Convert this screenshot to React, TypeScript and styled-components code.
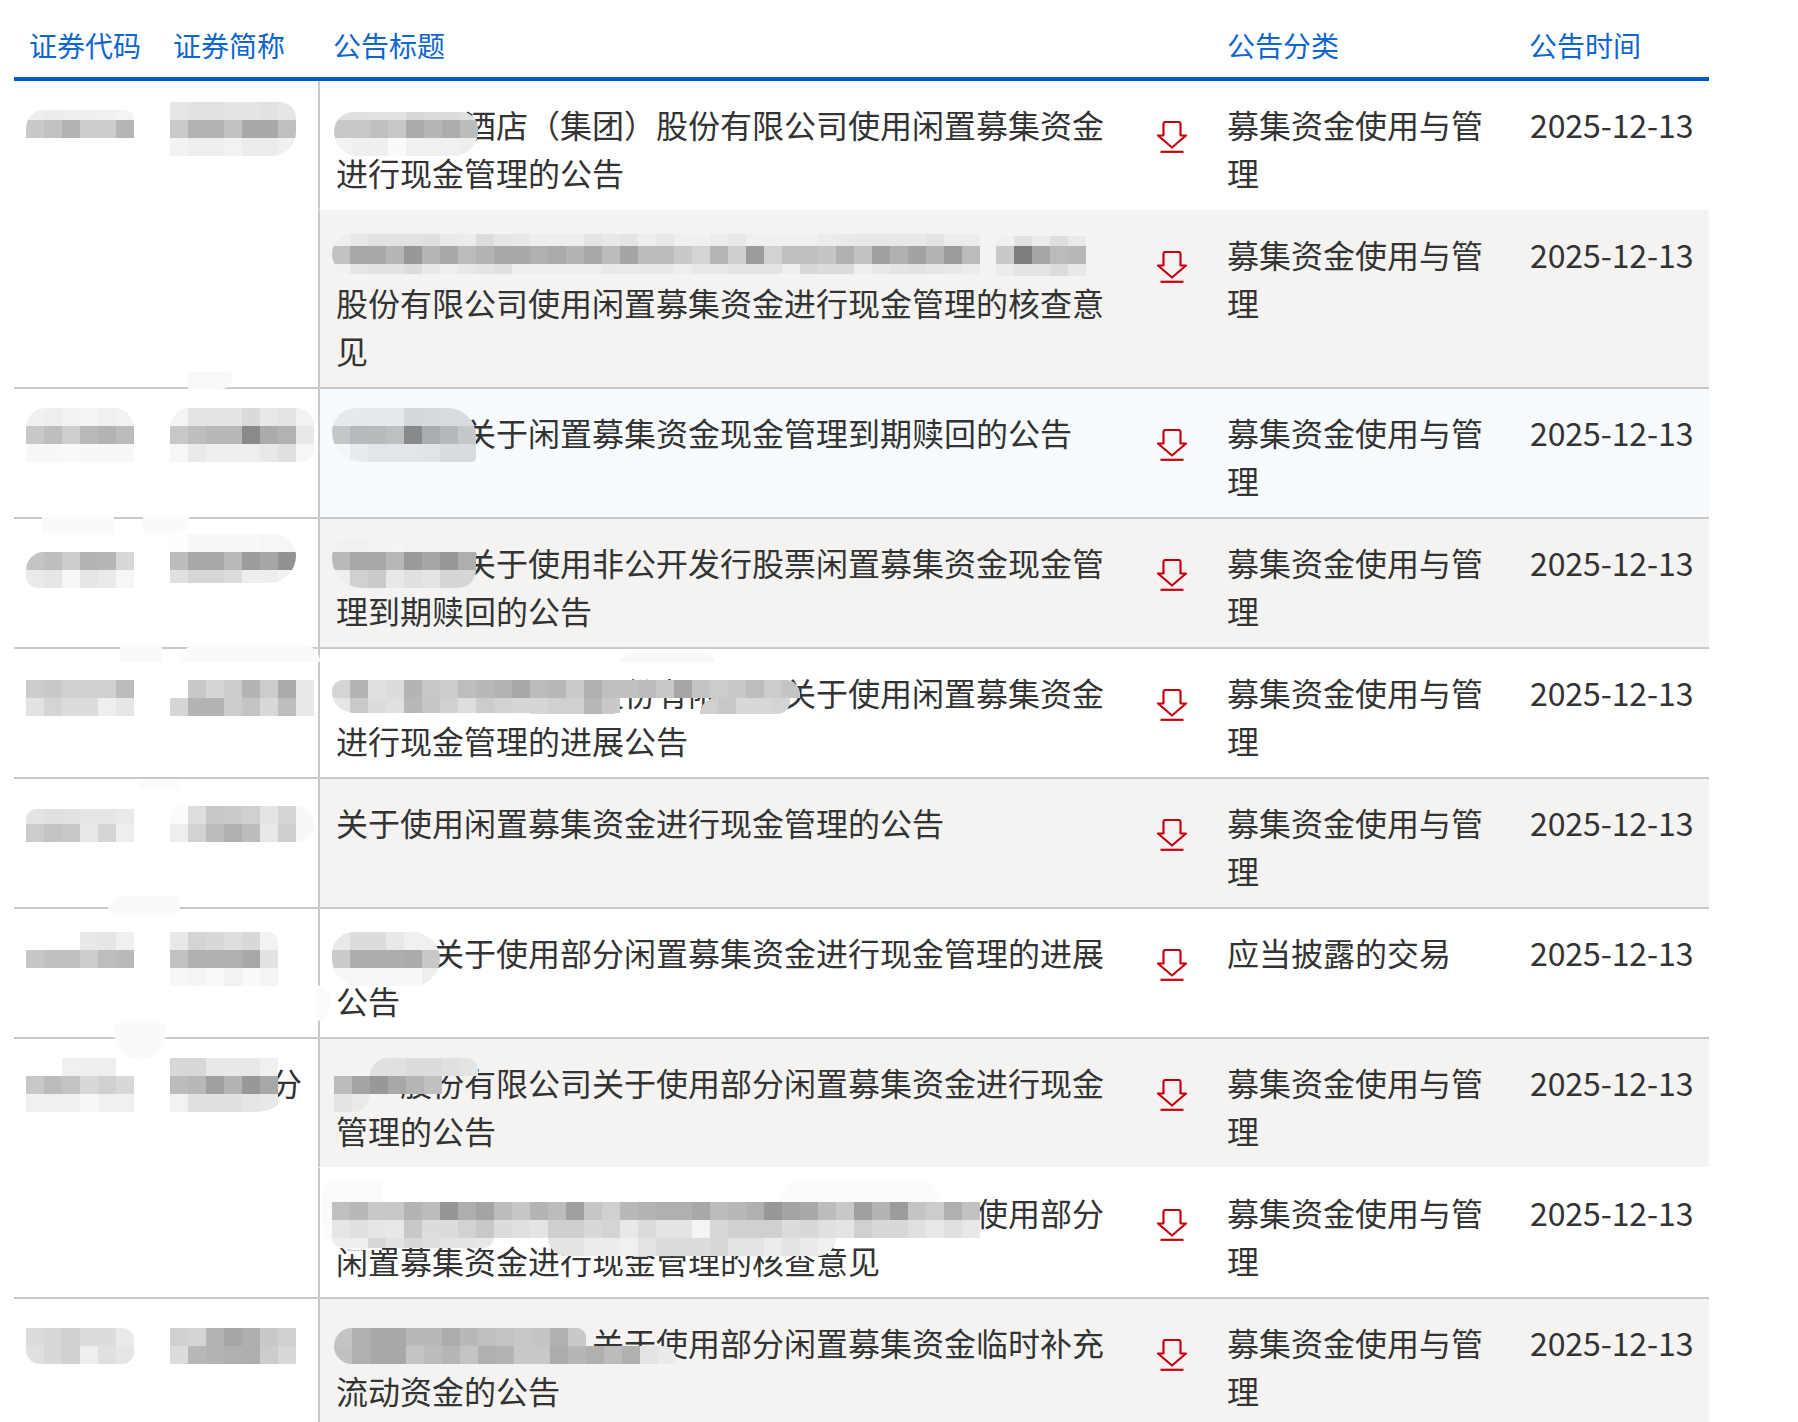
import React from "react";
import styled, { createGlobalStyle } from "styled-components";

const Global = createGlobalStyle`
  html, body { margin: 0; padding: 0; background: #fff; }
  body { font-family: "Noto Sans CJK SC", "Noto Sans", sans-serif; }
`;

const Page = styled.div`
  position: relative;
  width: 1798px;
  height: 1422px;
  overflow: hidden;
  padding-left: 14px;
  box-sizing: border-box;
`;

const Table = styled.table`
  width: 1695px;
  table-layout: fixed;
  border-collapse: separate;
  border-spacing: 0;
  font-size: 32px;
  line-height: 48px;
  color: #333;
`;

const HeadCell = styled.th`
  padding: 22px 0 0 15px;
  box-sizing: content-box;
  font-size: 28px;
  line-height: 46px;
  font-weight: 400;
  color: #0f66cf;
  text-align: left;
  vertical-align: top;
  border-bottom: 4px solid #005bc9;
  height: 55px;
`;

type Kind = "first" | "next" | "solo";
type Tone = "white" | "gray" | "blue";
const tones: Record<Tone, string> = { white: "#fff", gray: "#f4f3f2", blue: "#f8fbfe" };

const cellEdge = (p: { $kind: Kind }) =>
  p.$kind === "first"
    ? "padding: 19px 16px 13px 16px; border-bottom: 1px solid #fff;"
    : p.$kind === "next"
      ? "padding: 20px 16px 13px 16px; border-bottom: 2px solid #c9c9c9;"
      : "padding: 19px 16px 13px 16px; border-bottom: 2px solid #c9c9c9;";

const Cell = styled.td<{ $kind: Kind; $tone: Tone }>`
  ${cellEdge};
  background: ${(p) => tones[p.$tone]};
  vertical-align: top;
`;

const SideCell = styled.td`
  padding: 19px 16px 13px;
  vertical-align: top;
  background: #fff;
  border-bottom: 2px solid #c9c9c9;
  overflow: hidden;
`;

const TitleCell = styled(Cell)`
  border-left: 2px solid #c9c9c9;
  padding-right: 14px;
`;

const IconCell = styled(Cell)`
  padding-left: 12px;
  padding-right: 0;
`;

const CategoryCell = styled(Cell)`
  padding-left: 15px;
`;

const DateCell = styled(Cell)`
  white-space: nowrap;
  padding-right: 0;
  letter-spacing: -0.1px;
`;

const Hidden = styled.span<{ $em: number }>`
  display: inline-block;
  width: ${(p) => p.$em}em;
  height: 1em;
`;

const DownIcon = styled.svg`
  display: block;
  width: 30px;
  height: 32px;
  margin: 21px auto 0;
`;

const Overlay = styled.div`
  position: absolute;
  inset: 0;
  pointer-events: none;
`;

const Frame = styled.div<{ $x: number; $y: number; $w: number; $h: number; $r?: string; $fill?: string }>`
  position: absolute;
  left: ${(p) => p.$x}px;
  top: ${(p) => p.$y}px;
  width: ${(p) => p.$w}px;
  height: ${(p) => p.$h}px;
  border-radius: ${(p) => p.$r || "0"};
  background: ${(p) => p.$fill || "transparent"};
  overflow: hidden;
`;

const Grid = styled.svg`
  display: block;
`;

type Block = { x: number; y: number; rows: string[]; r?: string; trim?: number; cut?: number };
type Patch = { x: number; y: number; w: number; h: number; fill: string; r?: string };

const C = 18;

function Mosaic({ x, y, rows, r, trim = 0, cut = 0 }: Block) {
  const grid = rows.map((row) => row.trim().split(/\s+/));
  const cols = Math.max(...grid.map((g) => g.length));
  const w = cols * C;
  const h = grid.length * C - trim - cut;
  return (
    <Frame $x={x} $y={y + trim} $w={w} $h={h} $r={r}>
      <Grid width={w} height={h} viewBox={`0 ${trim} ${w} ${h}`} shapeRendering="crispEdges">
        {grid.flatMap((row, ry) =>
          row.map((v, cx) =>
            v === "--" ? null : (
              <rect
                key={`${ry}-${cx}`}
                x={cx * C}
                y={ry * C}
                width={C}
                height={C}
                fill={v.length === 2 ? `#${v}${v}${v}` : `#${v}`}
              />
            ),
          ),
        )}
      </Grid>
    </Frame>
  );
}

const patches: Patch[] = [
  { x: 188, y: 372, w: 44, h: 17, fill: "#f9f9f9", r: "0 4px 10px 0" },
  { x: 42, y: 517, w: 72, h: 16, fill: "#fafafa" },
  { x: 143, y: 517, w: 46, h: 16, fill: "#fafafa", r: "0 0 20px 0" },
  { x: 120, y: 645, w: 42, h: 17, fill: "#fafafa" },
  { x: 180, y: 645, w: 140, h: 17, fill: "#fafafa", r: "20px 20px 0 0" },
  { x: 620, y: 653, w: 95, h: 9, fill: "#f8f8f8", r: "40px 40px 0 0" },
  { x: 138, y: 780, w: 40, h: 8, fill: "#fafafa" },
  { x: 107, y: 896, w: 73, h: 17, fill: "#fafafa", r: "24px 0 0 0" },
  { x: 115, y: 1023, w: 50, h: 36, fill: "#fafafa", r: "0 0 24px 24px" },
  { x: 316, y: 985, w: 14, h: 36, fill: "#fbfbfb", r: "0 14px 14px 0" },
  { x: 322, y: 1180, w: 60, h: 70, fill: "#fbfbfb", r: "20px 0 0 30px" },
  { x: 780, y: 1180, w: 160, h: 22, fill: "#fbfbfb", r: "30px 30px 0 0" },
];

const blocks: Block[] = [
  // row 1
  { x: 26, y: 102, trim: 8, r: "18px 8px 0 0", rows: ["ee ec ee ef f0 f4", "c9 c2 b3 cc cd b5"] },
  { x: 170, y: 102, r: "0 16px 24px 0", rows: ["e6 e2 e2 e4 e4 e2 e6", "ca b3 b3 c2 a8 a8 bf", "f2 ee ee f2 ec ec f0"] },
  { x: 334, y: 102, trim: 10, r: "24px 20px 30px 30px", rows: ["e0 e0 e2 e2 d8 dc dc e0", "c8 c8 c0 c8 ab b6 ad bc", "f3 ef ef fa f0 f0 f0 ee"] },
  // row 2
  {
    x: 332,
    y: 228,
    trim: 6,
    cut: 8,
    r: "20px 0 0 20px",
    rows: [
      "ee e8 e2 e2 e2 e0 ea ec dc e6 e8 ee ee ee e4 e8 e4 ee e8 f0 f0 ec e8 f0 f0 f0 f0 ec ea e8 e8 e8 e8 e4 ec ec",
      "c2 a8 a8 b6 98 b6 a8 bc b4 a9 a9 b0 aa b4 a8 bc a5 bc bc c9 d4 b5 cf 9c d2 bf bf c5 b0 c2 a0 b0 a3 b4 9c bc",
      "f0 e6 e2 e2 dc e8 ee e8 e4 e0 ee ee ee ee ee e9 ea e8 e8 ee e8 e8 e4 e4 e4 ee d8 dc dc ee e8 e4 e2 e6 e8 ec",
    ],
  },
  { x: 996, y: 228, trim: 8, cut: 6, rows: ["f0 e2 ec de ea", "c9 7e a6 bb b7", "ec e4 e4 dc e8"] },
  // row 3
  { x: 26, y: 408, r: "20px 20px 0 0", rows: ["f0 ee f2 f4 f0 f2", "c8 be ce b9 b3 bc", "f8 f8 fa f8 f8 f8"] },
  { x: 170, y: 408, r: "20px 18px 14px 0", rows: ["f4 e4 e4 e4 da e8 e4 f2", "c8 be b8 b8 8a ab b2 e8", "f6 ea ee ee ee e8 e0 f6"] },
  {
    x: 332,
    y: 408,
    r: "24px 28px 4px 30px",
    rows: [
      "e6eaec e6eaec e6eaec e6eaec d4d8db d6dade d8dce0 d8dce0",
      "c3c7c8 b6babc b6bbbc bcc0c1 87898b a9adaf b5b9bb c4c8ca",
      "f4f6f7 e8ecee e2e6e9 e2e6e9 e2e6e9 e0e4e7 d8dce0 d8dce0",
    ],
  },
  // row 4
  { x: 26, y: 552, r: "18px 0 0 12px", rows: ["c4 be cc b4 b6 d8", "ea e6 f6 e6 ea f6"] },
  { x: 170, y: 534, cut: 5, r: "0 24px 30px 0", rows: ["fe f8 f8 f8 f8 f6 f6", "bc a8 a8 ba 9c a6 92", "e0 d6 d6 dc ee ee f2"] },
  { x: 332, y: 534, trim: 4, r: "26px 8px 24px 40px", rows: ["f0 f0 f2 f4 f2 f2 f2 f2", "b9 a8 a8 b8 9a a6 98 ae", "ee d0 ca e8 e0 e4 d6 d6"] },
  // row 5
  { x: 26, y: 680, rows: ["cc c8 d0 d0 d0 bc", "e2 d4 dc dc ee e6"] },
  { x: 170, y: 680, rows: ["-- c8 d6 cc b4 cc aa e8", "d6 b4 b4 cc c4 d8 be e8"] },
  {
    x: 332,
    y: 680,
    cut: 3,
    r: "16px 20px 0 30px",
    rows: ["d4 b4 e0 dc b4 c8 cc bd b8 b4 a8 bc b8 ca b0 c0 c0 bc c8 a6 c4 cc c8 bd cc c4", "e6 ca dc e0 b8 c6 d0 de cc d2 d6 d6 d0 d0 b8 c8 -- -- -- -- -- -- -- -- -- --"],
  },
  { x: 530, y: 698, cut: 2, r: "0 0 8px 0", rows: ["d6 d0 d0 b8 c8"] },
  { x: 700, y: 698, cut: 2, r: "20px 0 16px 0", rows: ["d0 c8 d8 d8 d4"] },
  // row 6
  { x: 26, y: 806, trim: 3, r: "10px 0 0 0", rows: ["e4 e0 e2 e6 e6 ea", "cc c4 c8 e8 d4 ee"] },
  { x: 170, y: 806, r: "16px 30px 30px 0", rows: ["fb de c8 ca d0 e4 d4 f8", "ee d2 bc b0 bc e8 ce f8"] },
  // row 7
  { x: 26, y: 932, rows: ["-- -- -- e8 e6 f0", "c6 c0 c0 cc bd ba"] },
  { x: 170, y: 932, r: "0 10px 0 0", rows: ["e8 d4 d8 de d8 f2", "c2 b0 b0 b0 a8 e2", "f6 f4 fa f2 fa f4"] },
  { x: 332, y: 932, r: "24px 30px 30px 30px", rows: ["e8 dc dc e8 f0 f0", "cb ad ad ad ab c8", "f6 f6 f8 f8 f8 ee"] },
  // row 8
  { x: 26, y: 1058, r: "14px 0 0 0", rows: ["-- -- f0 ee ee --", "c8 bc c4 d8 d0 d8", "f0 f0 f0 f8 f0 f0"] },
  { x: 170, y: 1058, r: "0 10px 40px 0", rows: ["d8 d8 e8 e8 e8 f0 --", "bc b8 a0 b4 98 a8 --", "f2 e0 e0 e0 e6 e8 --"] },
  { x: 334, y: 1076, rows: ["bc a4 98 a8 b5 c0"] },
  { x: 370, y: 1058, r: "24px 16px 0 0", rows: ["e0 e0 dc dc e0 e4"] },
  { x: 334, y: 1094, r: "0 0 18px 0", rows: ["e4 ea"] },
  // row 9
  {
    x: 332,
    y: 1202,
    rows: [
      "c0 b8 c8 c8 b4 bc 96 ae a4 bc c6 b4 bc a0 c6 d0 b8 b4 b0 b0 a8 bc b8 b0 98 a4 a8 bc c8 a0 b4 9c c4 cc b0 c2",
      "e6 e0 e6 e8 c8 dc dc d2 c8 dc e0 e4 cf cf d8 d4 e8 dc e4 e4 f4 d8 d0 d0 d0 dc d8 e0 e4 d0 d8 d8 e0 e8 e0 e8",
    ],
  },
  { x: 332, y: 1238, cut: 8, r: "0 0 30px 30px", rows: ["ee ee d8 e2 d8 de e4 e4 e8"] },
  { x: 548, y: 1238, r: "0 0 24px 24px", rows: ["e4 e4 ec ec f0 e4 dc dc dc d8 e4 e4 ec e4 ea f0"] },
  // row 10
  { x: 26, y: 1328, r: "0 12px 12px 14px", rows: ["dc d8 d0 dc dc ea", "e0 d8 d0 ee e0 e6"] },
  { x: 170, y: 1328, rows: ["d0 d4 b4 a6 ae c8 d0", "dc b8 b4 b0 ae cc d8"] },
  {
    x: 334,
    y: 1328,
    r: "20px 10px 0 20px",
    rows: ["c4 b0 a8 a8 b8 b8 ac b8 c0 c4 c8 c4 b0 c8", "c0 b0 a8 a8 c4 bc b6 c4 b0 b4 c8 c8 ac b6"],
  },
  { x: 586, y: 1346, r: "0 14px 0 0", rows: ["b0 bc b0 e4 ea"] },
];

const FUND = "募集资金使用与管理";

type Row = {
  kind: Kind;
  tone: Tone;
  side?: number;
  sideTail?: string;
  title: React.ReactNode;
  category?: string;
};

const rows: Row[] = [
  {
    kind: "first",
    tone: "white",
    side: 2,
    title: (
      <>
        <Hidden $em={4} />
        酒店（集团）股份有限公司使用闲置募集资金进行现金管理的公告
      </>
    ),
  },
  {
    kind: "next",
    tone: "gray",
    title: (
      <>
        <Hidden $em={24} />
        股份有限公司使用闲置募集资金进行现金管理的核查意见
      </>
    ),
  },
  {
    kind: "solo",
    tone: "blue",
    side: 1,
    title: (
      <>
        <Hidden $em={4} />
        关于闲置募集资金现金管理到期赎回的公告
      </>
    ),
  },
  {
    kind: "solo",
    tone: "gray",
    side: 1,
    title: (
      <>
        <Hidden $em={4} />
        关于使用非公开发行股票闲置募集资金现金管理到期赎回的公告
      </>
    ),
  },
  {
    kind: "solo",
    tone: "white",
    side: 1,
    title: (
      <>
        <Hidden $em={8} />
        股份有限
        <Hidden $em={2} />
        关于使用闲置募集资金进行现金管理的进展公告
      </>
    ),
  },
  { kind: "solo", tone: "gray", side: 1, title: "关于使用闲置募集资金进行现金管理的公告" },
  {
    kind: "solo",
    tone: "white",
    side: 1,
    title: (
      <>
        <Hidden $em={3} />
        关于使用部分闲置募集资金进行现金管理的进展公告
      </>
    ),
    category: "应当披露的交易",
  },
  {
    kind: "first",
    tone: "gray",
    side: 2,
    sideTail: "分",
    title: (
      <>
        <Hidden $em={2} />
        股份有限公司关于使用部分闲置募集资金进行现金管理的公告
      </>
    ),
  },
  {
    kind: "next",
    tone: "white",
    title: (
      <>
        <Hidden $em={20} />
        使用部分闲置募集资金进行现金管理的核查意见
      </>
    ),
  },
  {
    kind: "solo",
    tone: "gray",
    side: 1,
    title: (
      <>
        <Hidden $em={8} />
        关于使用部分闲置募集资金临时补充流动资金的公告
      </>
    ),
  },
];

function Download() {
  return (
    <DownIcon viewBox="0 0 30 32" fill="none" stroke="#c4000f" strokeWidth="2.2" strokeLinejoin="round">
      <path d="M6.5 14.5V3a2 2 0 0 1 2-2h13a2 2 0 0 1 2 2v11.5h5.5L15 26.5 1 14.5z" />
      <path d="M3.5 30.8h23" />
    </DownIcon>
  );
}

export default function App() {
  return (
    <Page>
      <Global />
      <Table>
        <colgroup>
          <col width={144} />
          <col width={160} />
          <col width={802} />
          <col width={92} />
          <col width={302} />
          <col width={195} />
        </colgroup>
        <thead>
          <tr>
            <HeadCell>证券代码</HeadCell>
            <HeadCell>证券简称</HeadCell>
            <HeadCell>公告标题</HeadCell>
            <HeadCell />
            <HeadCell>公告分类</HeadCell>
            <HeadCell>公告时间</HeadCell>
          </tr>
        </thead>
        <tbody>
          {rows.map((row, i) => (
            <tr key={i}>
              {row.side ? (
                <>
                  <SideCell rowSpan={row.side} />
                  <SideCell rowSpan={row.side}>
                    {row.sideTail && (
                      <>
                        <Hidden $em={3} />
                        {row.sideTail}
                      </>
                    )}
                  </SideCell>
                </>
              ) : null}
              <TitleCell $kind={row.kind} $tone={row.tone}>
                {row.title}
              </TitleCell>
              <IconCell $kind={row.kind} $tone={row.tone}>
                <Download />
              </IconCell>
              <CategoryCell $kind={row.kind} $tone={row.tone}>
                {row.category ?? FUND}
              </CategoryCell>
              <DateCell $kind={row.kind} $tone={row.tone}>
                2025-12-13
              </DateCell>
            </tr>
          ))}
        </tbody>
      </Table>
      <Overlay>
        {patches.map((p, i) => (
          <Frame key={i} $x={p.x} $y={p.y} $w={p.w} $h={p.h} $r={p.r} $fill={p.fill} />
        ))}
        {blocks.map((b, i) => (
          <Mosaic key={i} {...b} />
        ))}
      </Overlay>
    </Page>
  );
}
